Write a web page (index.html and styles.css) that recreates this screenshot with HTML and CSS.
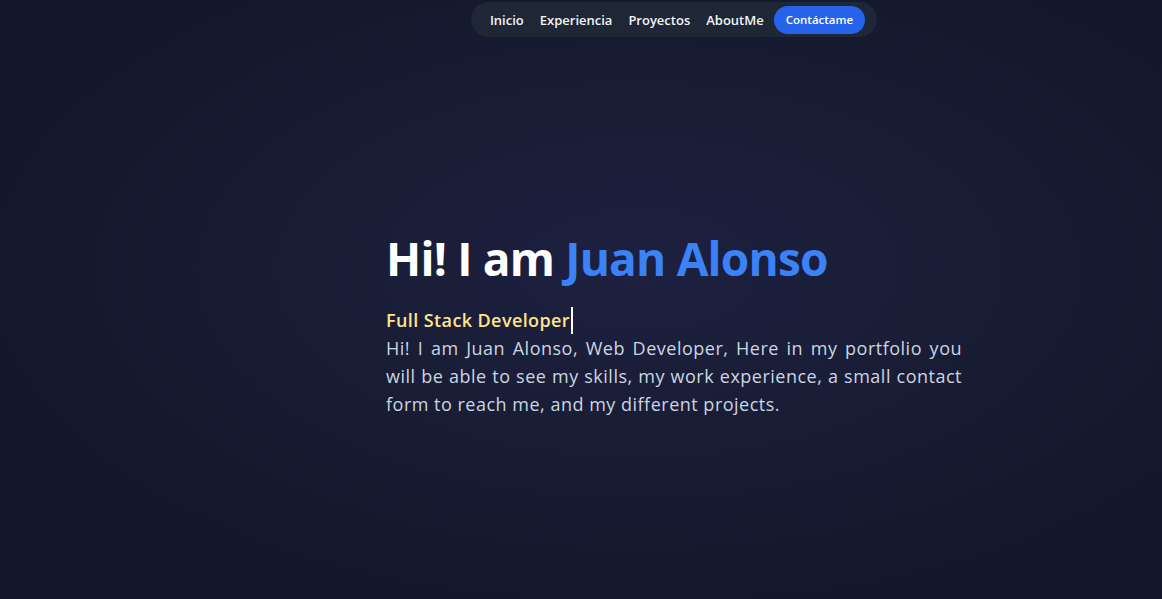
FILE: index.html
```html
<!DOCTYPE html>
<html lang="es">
<head>
<meta charset="utf-8">
<title>Juan Alonso</title>
<link rel="stylesheet" href="styles.css">
</head>
<body>
<div class="page">
  <header class="topbar">
    <nav class="nav">
      <a class="nav-link" href="#">Inicio</a>
      <a class="nav-link" href="#">Experiencia</a>
      <a class="nav-link" href="#">Proyectos</a>
      <a class="nav-link" href="#">AboutMe</a>
      <a class="nav-cta" href="#">Contáctame</a>
    </nav>
  </header>
  <main class="hero">
    <div class="hero-inner">
      <h1 class="title">Hi! I am <span class="accent">Juan Alonso</span></h1>
      <p class="role">Full Stack Developer<span class="caret"></span></p>
      <p class="desc">Hi! I am Juan Alonso, Web Developer, Here in my portfolio you will be able to see my skills, my work experience, a small contact form to reach me, and my different projects.</p>
    </div>
  </main>
</div>
</body>
</html>
```
FILE: styles.css
```css
* { box-sizing: border-box; }
html, body { margin: 0; padding: 0; }
body {
  font-family: "Open Sans", "Noto Sans", "Liberation Sans", sans-serif;
  background: #141829;
  color: #fff;
}
.page {
  height: 599px;
  display: flex;
  flex-direction: column;
  padding-left: 186px;
  background: radial-gradient(ellipse 60% 60% at 55% 45%, #1d2040 0%, #181c33 55%, #13172a 100%);
}
.topbar {
  display: flex;
  justify-content: center;
  padding-top: 2px;
}
.nav {
  display: flex;
  align-items: center;
  background: #1f2635;
  border-radius: 18px;
  height: 35px;
  padding: 0 12px 0 11px;
}
.nav-link {
  color: #f1f5f9;
  text-decoration: none;
  font-size: 13px;
  font-weight: 600;
  padding: 0 8px;
}
.nav-cta {
  background: #2563eb;
  color: #fff;
  text-decoration: none;
  font-size: 11.5px;
  font-weight: 600;
  border-radius: 14px;
  padding: 0 12px;
  height: 28px;
  display: flex;
  align-items: center;
  margin-left: 2px;
}
.hero {
  display: flex;
  justify-content: center;
  padding-top: 191px;
}
.hero-inner {
  width: 576px;
}
.title {
  margin: 0;
  font-size: 46px;
  font-weight: 700;
  line-height: 60px;
  letter-spacing: -0.8px;
  color: #fff;
}
.accent { color: #3b82f6; }
.role {
  margin: 18px 0 0;
  font-size: 18px;
  font-weight: 600;
  line-height: 28px;
  color: #fde68a;
  letter-spacing: 0.4px;
  display: flex;
  align-items: center;
}
.caret {
  display: inline-block;
  width: 2px;
  height: 27px;
  background: #fff;
  margin-left: 1px;
}
.desc {
  margin: 0;
  font-size: 18px;
  line-height: 28px;
  color: #cbd5e1;
  text-align: justify;
  letter-spacing: 0.5px;
}
```
